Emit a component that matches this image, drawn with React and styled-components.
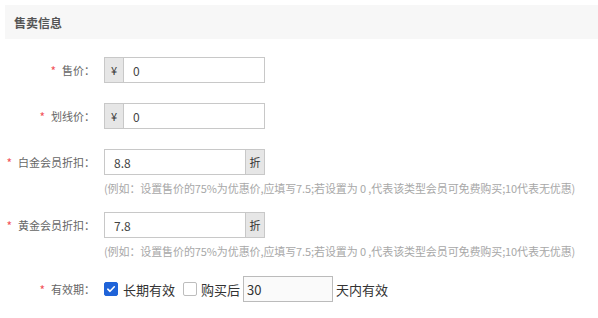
import styled, { createGlobalStyle } from 'styled-components';

const GlobalStyle = createGlobalStyle`
    body {
        margin: 0;
        background: #fff;
        font-family: "Noto Sans CJK SC", "Noto Sans", sans-serif;
    }
`;

const Wrapper = styled.section`
    padding: 5px 0 0 5px;
`;

const Header = styled.div`
    height: 34px;
    background: #f7f7f7;
    display: flex;
    align-items: center;
    padding-left: 9px;
    font-size: 12px;
    font-weight: bold;
    color: #555;
`;

const Form = styled.div`
    padding-top: 18px;
`;

const Item = styled.div`
    display: flex;
    align-items: ${(p) => (p.$center ? 'center' : 'flex-start')};
    margin-bottom: ${(p) => p.$gap}px;
`;

const Label = styled.label`
    width: 90px;
    margin-right: 9px;
    flex-shrink: 0;
    height: 26px;
    display: flex;
    align-items: center;
    justify-content: flex-end;
    font-size: 11px;
    color: #666;
    white-space: nowrap;

    i {
        font-style: normal;
        font-size: 12px;
        color: #f2545b;
        margin-right: 6px;
    }
`;

const Content = styled.div`
    display: flex;
    flex-direction: column;
`;

const InputGroup = styled.div`
    display: flex;
    width: 161px;
    height: 26px;
    box-sizing: border-box;
`;

const Addon = styled.span`
    width: 20px;
    flex-shrink: 0;
    box-sizing: border-box;
    background: #e6e6e6;
    border: 1px solid #c8c8c8;
    display: flex;
    align-items: center;
    justify-content: center;
    font-size: 11px;
    color: #333;
`;

const Input = styled.input`
    flex: 1;
    min-width: 0;
    box-sizing: border-box;
    height: 26px;
    border: 1px solid #c8c8c8;
    border-left-width: ${(p) => (p.$prefix ? 0 : 1)}px;
    border-right-width: ${(p) => (p.$suffix ? 0 : 1)}px;
    padding: 0 0 0 9px;
    font-size: 12px;
    color: #444;
    font-family: inherit;
    outline: none;
    background: #fff;
`;

const Help = styled.div`
    margin-top: 5px;
    font-size: 11px;
    line-height: 16px;
    color: #a8a8a8;
    white-space: nowrap;
    letter-spacing: -0.1px;
`;

const Choices = styled.div`
    display: flex;
    align-items: center;
    font-size: 13px;
    color: #333;
`;

const Check = styled.span`
    width: 14px;
    height: 14px;
    box-sizing: border-box;
    border-radius: 2px;
    margin-right: ${(p) => p.$gap}px;
    border: 1px solid ${(p) => (p.$on ? '#1f63d8' : '#bdbdbd')};
    background: ${(p) => (p.$on ? '#1f63d8' : '#fff')};
    display: flex;
    align-items: center;
    justify-content: center;
`;

const ChoiceText = styled.span`
    margin-right: ${(p) => p.$gap}px;
`;

const DaysInput = styled.input`
    width: 90px;
    height: 26px;
    box-sizing: border-box;
    border: 1px solid #bbb;
    background: #fafafa;
    padding: 0 0 0 3px;
    font-size: 13px;
    color: #333;
    font-family: inherit;
    outline: none;
    margin-right: 3px;
`;

const Tick = () => (
    <svg width="10" height="10" viewBox="0 0 10 10">
        <path d="M1.8 5.2 L4 7.3 L8.3 2.8" fill="none" stroke="#fff" strokeWidth="1.6" strokeLinecap="round" strokeLinejoin="round" />
    </svg>
);

const HELP = '(例如：设置售价的75%为优惠价,应填写7.5;若设置为 0 ,代表该类型会员可免费购买;10代表无优惠)';

const App = () => {
    return (
        <Wrapper>
            <GlobalStyle />
            <Header>售卖信息</Header>
            <Form>
                <Item $gap={20}>
                    <Label><i>*</i>售价：</Label>
                    <InputGroup>
                        <Addon>¥</Addon>
                        <Input $prefix defaultValue="0" />
                    </InputGroup>
                </Item>
                <Item $gap={20}>
                    <Label><i>*</i>划线价：</Label>
                    <InputGroup>
                        <Addon>¥</Addon>
                        <Input $prefix defaultValue="0" />
                    </InputGroup>
                </Item>
                <Item $gap={16}>
                    <Label><i>*</i>白金会员折扣：</Label>
                    <Content>
                        <InputGroup>
                            <Input $suffix defaultValue="8.8" />
                            <Addon>折</Addon>
                        </InputGroup>
                        <Help>{HELP}</Help>
                    </Content>
                </Item>
                <Item $gap={17}>
                    <Label><i>*</i>黄金会员折扣：</Label>
                    <Content>
                        <InputGroup>
                            <Input $suffix defaultValue="7.8" />
                            <Addon>折</Addon>
                        </InputGroup>
                        <Help>{HELP}</Help>
                    </Content>
                </Item>
                <Item $gap={0} $center>
                    <Label><i>*</i>有效期：</Label>
                    <Choices>
                        <Check $on $gap={5}><Tick /></Check>
                        <ChoiceText $gap={8}>长期有效</ChoiceText>
                        <Check $gap={4} />
                        <ChoiceText $gap={3}>购买后</ChoiceText>
                        <DaysInput defaultValue="30" />
                        <span>天内有效</span>
                    </Choices>
                </Item>
            </Form>
        </Wrapper>
    );
};

export default App;
